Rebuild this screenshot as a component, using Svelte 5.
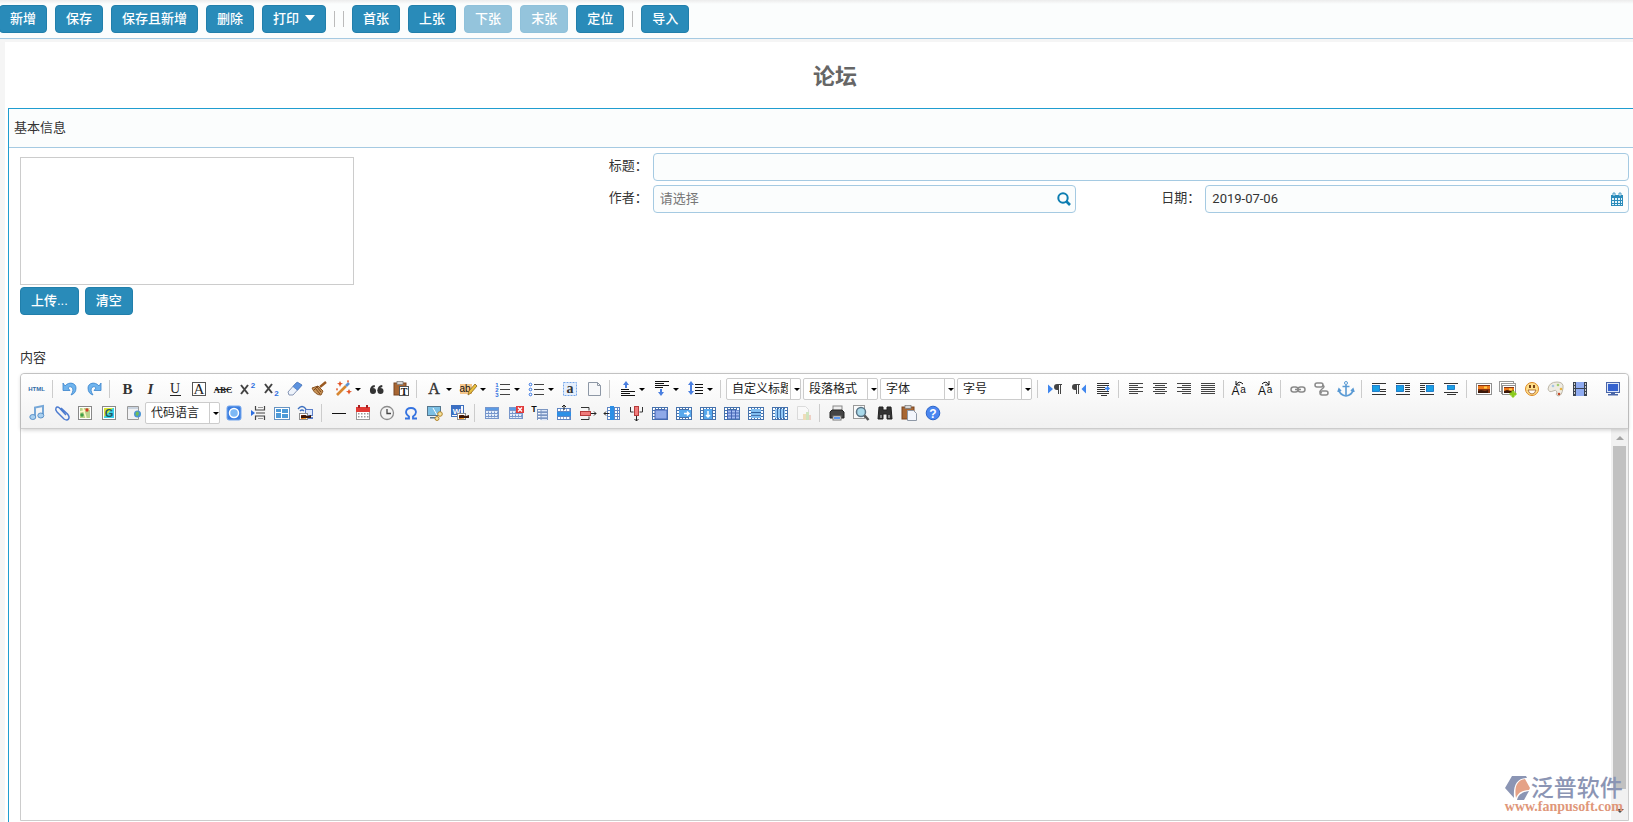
<script lang="ts">
  interface Tool {
    type: 'button' | 'menu' | 'select' | 'sep' | 'blank';
    icon?: string;
    label?: string;
  }

  const b = (icon: string, label: string): Tool => ({ type: 'button', icon, label });
  const m = (icon: string, label: string): Tool => ({ type: 'menu', icon, label });
  const s = (label: string): Tool => ({ type: 'select', label });
  const sep: Tool = { type: 'sep' };
  const blank: Tool = { type: 'blank' };

  const r = (x: number, y: number, w: number, h: number, fill: string, extra = '') =>
    `<rect x="${x}" y="${y}" width="${w}" height="${h}" fill="${fill}" ${extra}/>`;
  const p = (d: string, fill = 'none', stroke = 'none', width = 1) =>
    `<path d="${d}" fill="${fill}" stroke="${stroke}" stroke-width="${width}"/>`;
  const t = (x: number, y: number, size: number, text: string, fill = '#333', extra = '') =>
    `<text x="${x}" y="${y}" font-size="${size}" fill="${fill}" text-anchor="middle" font-family="Liberation Serif, serif" ${extra}>${text}</text>`;
  // rows of [x, y, width]
  const bars = (rows: number[][], fill = '#444') => rows.map(([x, y, w]) => r(x, y, w, 1, fill)).join('');
  const sans = 'style="font-family:Liberation Sans,sans-serif;font-weight:700"';
  const thin = 'style="font-family:Liberation Sans,sans-serif"';

  const undo = p('M5 6l2 3c4-5 11-3 11 2 0 4-2 6-5 7 2-3 2.600-6 1-7.500-1.500-1.500-3.500-.500-4 .5l2 2.500H5z', '#6fb4ee', '#3b84cc', 0.8);
  const grid = () =>
    r(5, 6, 14, 12, '#7796cb') + r(6, 7, 12, 2, '#5b9ae4') +
    [10, 13, 16].map((y) => [6, 9, 12, 15].map((x) => r(x, y, 2, y === 16 ? 1 : 2, '#e6effb') + r(x + 2, y, 0.5, 1, '#e6effb')).join('')).join('');
  const cells = r(4, 6, 16, 13, '#4773ad') +
    [7, 10, 13, 16].map((y) => r(5, y, 2, 2, '#fff') + r(17, y, 2, 2, '#fff')).join('') +
    [8, 11, 14].map((x) => r(x, 7, 2, 1, '#fff') + r(x, 17, 2, 1, '#fff')).join('');
  const justify = (rows: number[][]) => bars(rows.map(([x, w], i) => [x, 6 + i * 2, w]), '#444');
  const bluebox = (x: number, y: number, h = 6) => r(x, y, 7, h, '#19a0e6', 'stroke="#0a6cc0" stroke-width=".8"');
  const photo = (x: number, y: number, w: number, h: number) =>
    r(x, y, w, h, '#fff', 'stroke="#8f8f8f"') + r(x + 1.5, y + 1.5, w - 3, h - 3, '#8a3510') +
    r(x + 1.5, y + 2.5, w - 3, 3, '#ef7c1c') + r(x + w / 2, y + 3, 3, 2, '#ffcf4a') + p(`M${x + 1.5} ${y + h - 1.5}v-2l3-1 4 1 3-1v3z`, '#3a1708');
  const arrowUp = (x: number, y: number) => p(`M${x} ${y}l3 4h-2v3h-2v-3h-2z`, '#4a7fe0');
  const arrowDown = (x: number, y: number) => p(`M${x} ${y}l3-4h-2v-3h-2v3h-2z`, '#4a7fe0');
  const pilcrow = (x: number) => p(`M${x + 8} 7h-5a3 3 0 0 0 0 6h1v4h1V8h1v9h1V8h1z`, '#444');

  const icons: Record<string, string> = {
    html: t(11.5, 14, 6, 'HTML', '#2f6ba8', sans),
    undo,
    redo: `<g transform="translate(24 0) scale(-1 1)">${undo}</g>`,
    bold: t(12.5, 17, 15, 'B', '#333', 'font-weight="700"'),
    italic: t(11.5, 17, 15, 'I', '#333', 'font-weight="700" font-style="italic"'),
    underline: t(12, 16, 14, 'U', '#222') + r(7, 18, 11, 1, '#222'),
    border: r(5.5, 5.5, 13, 13, '#fff', 'stroke="#555"') + t(12, 17, 15, 'A', '#222'),
    strike: t(12, 16, 9, 'ABC', '#222', 'font-weight="700"') + r(4, 12, 16, 1, '#222'),
    sup: p('M6 8l7 9M13 8l-7 9', 'none', '#444', 2) + t(18, 11, 8, '2', '#2f6fe0', sans),
    sub: p('M6 7l7 9M13 7l-7 9', 'none', '#444', 2) + t(17.5, 18.5, 8, '2', '#2f6fe0', sans),
    eraser: p('M5 15l8-9q1-1 2 0l4 2-9 10H6z', '#eef3fb', '#8796b5') + p('M10 9.500l3.500-3.700q1-1 2 0l3.500 2.400-4.500 5z', '#5c92df', '#4778c2', 0.7),
    broom: p('M19 5l-6 5', 'none', '#9a5a22', 2.4) + p('M5 11l6-2 5 5-2 4q-6 0-9-7z', '#c89458', '#8b5524') + p('M8 11l5 6M10 10l4 5M11 9l-4 4', 'none', '#7c461b'),
    magic: p('M6 18L15 9', 'none', '#d78631', 2.6) + p('M15 9l3-3', 'none', '#5d91d1', 2.6) +
      p('M9 4l1 2 2 .5-2 1L9 10 8 7.500l-2-1L8 6zM18 12l1 2 2 .5-2 1-1 2-1-2-2-1 2-.5zM17 3l1 1-1 2-1-2zM6 11l1 1-1 2-1-2z', '#e35425'),
    quote: `<circle cx="8" cy="14" r="3" fill="#333"/><circle cx="15.500" cy="14" r="3" fill="#333"/>` + p('M5.800 14q0-4.500 4-5M13.300 14q0-4.500 4-5', 'none', '#333', 1.8),
    paste: r(5, 6, 12, 12, '#a86632', 'stroke="#794520"') + r(8, 4.5, 6, 3, '#d8d8d8', 'stroke="#777" stroke-width=".7"') +
      r(10.5, 9.5, 9, 9, '#fff', 'stroke="#555"') + t(15, 17.5, 10, 'T', '#111', 'font-weight="700"'),
    forecolor: t(12, 17, 16, 'A', '#333', 'stroke="#333" stroke-width=".4"'),
    backcolor: r(4, 7, 12, 10, '#f5c68b') + t(9, 15, 10, 'ab', '#111', thin) + p('M12 18l1-4 6-7 2 2-6 7z', '#e9bf3e', '#8a6521', 0.8),
    ol: t(7, 9.5, 6, '1', '#2f6fe0', sans) + t(7, 14.5, 6, '2', '#2f6fe0', sans) + t(7, 19.5, 6, '3', '#2f6fe0', sans) + bars([[10, 7, 10], [10, 12, 10], [10, 17, 10]]),
    ul: [7, 12, 17].map((y) => `<circle cx="6.500" cy="${y + 0.5}" r="1.300" fill="#fff" stroke="#2f6fe0"/>`).join('') + bars([[10, 7, 10], [10, 12, 10], [10, 17, 10]]),
    selectall: r(5.5, 5.5, 13, 13, '#e5effd', 'stroke="#77a8ea" stroke-dasharray="2 1"') + t(12, 16, 14, 'a', '#333', 'font-weight="700"'),
    clear: p('M6.500 5.500h9l3 3v10h-12z', '#f7f8fa', '#8e98a6') + p('M15.500 5.500v3h3', 'none', '#8e98a6'),
    rowtop: arrowUp(11, 4) + bars([[6, 12, 8], [6, 14, 14], [6, 16, 9], [6, 18, 14]], '#111'),
    rowbottom: arrowDown(12, 19) + bars([[6, 4, 14], [6, 6, 9], [6, 8, 14], [6, 10, 8]], '#111'),
    lineheight: arrowUp(8, 4) + arrowDown(8, 18) + bars([[12, 7, 8], [12, 10, 8], [12, 13, 8], [12, 16, 8]], '#111'),
    ltr: p('M5 7.500l5 4.500-5 4.500z', '#3f86ee') + pilcrow(11),
    rtl: p('M19 7.500L14.500 12l4.500 4.500z', '#3f86ee') + pilcrow(5),
    indent: bars([[6, 6, 12], [6, 8, 12], [6, 10, 8], [6, 12, 8], [6, 14, 12], [6, 16, 12], [10, 18, 6]], '#333') + p('M14 10.500h2v-2l3 3-3 3v-2h-2z', '#3f86ee'),
    left: justify([[5, 14], [5, 9], [5, 14], [5, 9], [5, 14], [5, 9]]),
    center: justify([[5, 14], [7, 10], [5, 14], [7, 10], [5, 14], [7, 10]]),
    right: justify([[5, 14], [10, 9], [5, 14], [10, 9], [5, 14], [10, 9]]),
    full: justify([[5, 14], [5, 14], [5, 14], [5, 14], [5, 14], [5, 14]]),
    upper: t(6.5, 18, 12, 'A', '#111', thin) + t(14, 16, 10, 'a', '#111', thin) + p('M7 8q3-5 7-1M7 4v4h4', 'none', '#111'),
    lower: t(9, 18, 12, 'A', '#111', thin) + t(16.5, 16, 10, 'a', '#111', thin) + p('M9 7q4-4 7 1M16 4v4h-4', 'none', '#111'),
    link: `<g fill="none" stroke="#8a8a8a" stroke-width="1.500"><rect x="5" y="10" width="7" height="5" rx="2.500"/><rect x="12" y="10" width="7" height="5" rx="2.500"/><path d="M9 12.500h6"/></g>`,
    unlink: `<g fill="none" stroke="#8a8a8a" stroke-width="1.500"><rect x="5" y="6" width="8" height="4" rx="2"/><rect x="10" y="14" width="8" height="4" rx="2"/><path d="M12 8q4 1 0 4t0 4"/></g>`,
    anchor: `<circle cx="12" cy="6" r="1.500" fill="#fff" stroke="#5a9ad4"/>` + p('M12 8v10M8.500 9.500h7M5 13q1 5 7 6 6-1 7-6M4 15l1-3 2 2M20 15l-1-3-2 2', 'none', '#5a9ad4', 1.6),
    imgnone: bars([[5, 6, 14], [13, 12, 6], [13, 14, 6], [5, 17, 14]], '#333') + bluebox(5.5, 8.5),
    imgleft: bars([[5, 6, 14], [14, 8, 5], [14, 10, 5], [14, 12, 5], [14, 14, 5], [5, 17, 14]], '#333') + bluebox(5.5, 8.5),
    imgright: bars([[5, 6, 14], [5, 8, 5], [5, 10, 5], [5, 12, 5], [5, 14, 5], [5, 17, 14]], '#333') + bluebox(11.5, 8.5),
    imgcenter: bars([[5, 6, 14], [5, 15, 14], [8, 17, 9]], '#333') + bluebox(8.5, 8.5, 4),
    image: photo(4.5, 6.5, 15, 11),
    images: r(3.5, 4.5, 14, 10, '#fff', 'stroke="#999"') + r(5.5, 6.5, 14, 10, '#fff', 'stroke="#999"') + photo(6.5, 8.5, 13, 9) + p('M16 14h2v2h2v2h-2v2h-2v-2h-2v-2h2z', '#8ccb1f', '#8ccb1f'),
    smile: `<circle cx="12" cy="12" r="6.500" fill="#ffe08a" stroke="#dc8723"/>` + p('M8 13h8q-1 4-4 4t-4-4z', '#fff', '#a15a1c', 0.8) + r(9, 8, 2, 3, '#7a4316') + r(13, 8, 2, 3, '#7a4316'),
    palette: p('M4 12q1-7 9-7 7 0 6 6-1 8-5 8-3-1-1-4-1-3-4-1-4 2-5-2z', '#eeebe2', '#bdb7a8') +
      `<circle cx="9" cy="9" r="1.300" fill="#a7c6e4"/><circle cx="14" cy="8" r="1.300" fill="#a3cf72"/><circle cx="17" cy="12" r="1.300" fill="#e7b343"/><circle cx="15" cy="17" r="1.300" fill="#c44b2b"/>`,
    video: r(5, 5, 14, 14, '#3a4351') + r(8, 5, 8, 6, '#8fabf0') + r(8, 12, 8, 7, '#8fabf0') + [6, 9, 12, 15].map((y) => r(6, y, 1, 2, '#ccc') + r(17, y, 1, 2, '#ccc')).join(''),
    screen: r(5.5, 5.5, 13, 10, '#dde6f7', 'stroke="#4a66a8"') + r(7, 7, 10, 7, '#3462cf') + r(10, 16, 4, 1, '#4a66a8') + r(7, 17, 10, 1.5, '#4a66a8'),
    music: p('M10 16V6.500L18 5v9', 'none', '#77a8d8', 2) + `<ellipse cx="7.800" cy="16" rx="3" ry="2.500" fill="#a9d0f0" stroke="#5c92c8"/><ellipse cx="15.800" cy="14.500" rx="3" ry="2.500" fill="#a9d0f0" stroke="#5c92c8"/>`,
    attach: p('M17 14L10.500 7Q8 5 7 7t1 4l7 7q3 2 4.500 0t-1-5l-6.500-6', 'none', '#4c7bd0', 1.5),
    map: r(5.5, 5.5, 13, 13, '#fff', 'stroke="#888"') + r(7, 7, 10, 10, '#b8d38a') + p('M7 11l10-3M10 7l3 10', 'none', '#fff7c8', 1.5) + `<circle cx="14" cy="9" r="1.700" fill="#cf3d25"/><circle cx="9" cy="14" r="1.700" fill="#3f9e46"/>`,
    gmap: r(5.5, 5.5, 13, 13, '#fff', 'stroke="#888"') + r(7, 7, 10, 10, '#37d0e8') + p('M7 7h9l-9 9z', '#d9e832') + t(12, 16, 11, 'G', '#1f5a62', sans),
    frame: p('M6.500 5.500h11v13h-11z', '#f1f2f4', '#999') + r(7, 6, 10, 2, '#c9d3df') + `<circle cx="16.500" cy="13" r="3.500" fill="#4a93d5"/>` + p('M15 11l2-.5 1 2-1.500 3-2-2z', '#6fbd58'),
    app: r(5, 5, 14, 14, '#3d7fe0', 'rx="2" stroke="#76a8ee"') + `<circle cx="12" cy="12" r="4.500" fill="#7db8f5" stroke="#fff" stroke-width="1.500"/>`,
    pagebreak: p('M5 9l4 3-4 3z', '#2f6fe0') + p('M9.500 5v4h9V5M9.500 19v-4h9v4M10 12h9', 'none', '#444', 1.2) + r(12, 6, 5, 1, '#999') + r(12, 17, 5, 1, '#999'),
    template: r(4.500, 6.500, 15, 12, '#fff', 'stroke="#6693c2"') + r(6, 8, 5, 3, '#4d9ad8') + r(12, 8, 6, 4, '#4d9ad8') + r(6, 12, 5, 5, '#4d9ad8') + r(12, 13, 6, 4, '#4d9ad8'),
    remote: p('M4 8q4-5 8 0M6 10q2-2 4 0', 'none', '#3c6fbf', 1.3) + r(11.5, 8.5, 7, 6, '#dfe9fb', 'stroke="#5a7ec8"') + r(13, 16, 6, 2, '#5a7ec8') + photo(5.5, 12.5, 8, 6),
    hr: r(5, 12, 14, 1, '#111'),
    date: r(5.5, 6.5, 13, 12, '#fff', 'stroke="#999"') + r(5, 6, 14, 5, '#e23a35') + r(7, 4, 2, 3, '#a52020') + r(15, 4, 2, 3, '#a52020') +
      [12, 15].map((y) => [7, 10, 13, 16].map((x) => r(x, y, 1.5, 1.5, '#999')).join('')).join(''),
    time: `<circle cx="12" cy="12" r="6.500" fill="#f4f4f4" stroke="#8c8c8c" stroke-width="1.300"/>` + p('M12 8v4.500h4', 'none', '#444', 1.3),
    omega: p('M6 17.500h4v-2q-3-2-3-4.500Q7.500 7 12 7t5 4q0 2.500-3 4.500v2h4', 'none', '#3573e0', 1.8),
    snap: r(4.5, 5.500, 13, 9, '#7cc0e4', 'stroke="#54758c"') + r(7, 16, 8, 1.500, '#54758c') + `<circle cx="17" cy="13" r="2.300" fill="#f5e29b" stroke="#b3852c"/><circle cx="14" cy="17.500" r="2" fill="#f5e29b" stroke="#b3852c"/>` + p('M10 7l4 7', 'none', '#fff'),
    word: r(4.5, 4.500, 12, 11, '#f4f8ff', 'stroke="#3d6fbd"') + r(5, 5, 9, 9, '#3a6fc4') + t(9.5, 12.5, 8, 'W', '#fff', sans) + photo(10.5, 12.5, 8, 6),
    table: grid(),
    deltable: grid() + r(12, 5, 8, 7, '#e13a3a') + p('M14 6.500l4 4M18 6.500l-4 4', 'none', '#fff', 1.4),
    tabletitle: t(6, 11, 9, 'T', '#111', sans) + r(9, 8, 11, 11, '#7b96c2') + [8, 11, 14, 17].map((y) => r(10, y + 1, 2.500, 1.300, '#fff') + r(13.500, y + 1, 5.500, 1.300, '#dce7f8')).join(''),
    insrow: r(5, 7, 14, 12, '#5f86c4') + [8, 16].map((y) => [6, 9, 12, 15].map((x) => r(x, y, 2.300, 2, '#fff')).join('')).join('') + r(5, 11, 14, 4, '#2c8fe6') + p('M12 9V4M10 6l2-2 2 2', 'none', '#222'),
    delrow: p('M5 6.500h8v3M5 18.500h8v-3', 'none', '#333') + r(4.500, 10.500, 10, 4, '#f07b7b', 'stroke="#b63b3b"') + p('M15 12.500h5M18 10.500l2 2-2 2', 'none', '#222'),
    inscol: r(7, 6, 13, 13, '#5f86c4') + [7, 10, 13, 16].map((y) => r(8, y, 2, 2, '#fff') + r(15, y, 2, 2, '#fff') + r(18, y, 1, 2, '#fff')).join('') + r(10, 5, 4, 14, '#2c8fe6') + p('M9 12.500H4M6 10.500l-2 2 2 2', 'none', '#222'),
    delcol: p('M6.500 6v5h3M18.500 6v5h-3', 'none', '#333') + r(10.500, 5.500, 4, 9, '#f07b7b', 'stroke="#b63b3b"') + p('M12.500 15v5M10.500 18l2 2 2-2', 'none', '#222'),
    merge: cells + r(7, 9, 12, 9, '#8ea9e8', 'stroke="#4565b5"'),
    mergeright: cells + r(7, 9, 12, 7, '#58a8ec') + p('M12 12.500h5M15 10.500l2 2-2 2', 'none', '#fff', 1.5),
    mergedown: cells + r(8, 8, 8, 10, '#58a8ec') + p('M12 10v6M10 14l2 2 2-2', 'none', '#fff', 1.5),
    split: cells + r(7, 9, 12, 9, '#4565b5') + [9, 12, 15].map((y) => [8, 12, 16].map((x) => r(x, y + 0.5, 3, 2, '#a5bdf2')).join('')).join(''),
    splitrows: cells + [8, 12, 15].map((y) => r(7, y, 10, y === 8 ? 3 : 2, '#7fbdf0')).join('') + r(7, 11, 10, 1, '#2f5f9c'),
    splitcols: cells + r(7, 8, 10, 9, '#8fc5f3') + [9, 12, 15].map((x) => r(x, 7, 1, 11, '#3a6cab')).join(''),
    chart: `<g opacity=".35">` + p('M5.500 5.500h8l3 3v10h-11z', '#fff', '#aaa') + r(11, 13, 3, 6, '#e8b250') + r(14, 11, 3, 8, '#8cc860') + r(17, 14, 2, 5, '#e58f70') + '</g>',
    print: r(8, 5, 9, 6, '#eee', 'stroke="#888"') + p('M5 11l2-2h10l2 2v6H5z', '#444', '#222') + r(8, 15, 8, 4, '#fff', 'stroke="#777"') + r(9, 16, 6, 2, '#5b97ee'),
    preview: r(4.500, 4.500, 11, 13, '#fafafa', 'stroke="#999"') + `<circle cx="12" cy="11" r="4.500" fill="#a9d9ea" stroke="#5b7586" stroke-width="1.500"/>` + p('M15.500 14.500l4 4.500', 'none', '#555', 2.5),
    find: p('M6 6h4v3h4V6h4l1 12h-5v-5h-4v5H5z', '#333', '#222') + r(7, 14, 2, 3, '#888') + r(15, 14, 2, 3, '#888'),
    drafts: r(5, 6, 12, 12, '#a86632', 'stroke="#794520"') + r(8, 4.500, 6, 3, '#d8d8d8', 'stroke="#777" stroke-width=".7"') + p('M10.500 9.500h6l3 3v7h-9z', '#f3f6fc', '#8e98a6'),
    help: `<circle cx="12" cy="12" r="6.800" fill="#4a86f0" stroke="#2d65c8"/>` + t(12, 16.5, 12, '?', '#fff', sans),
  };

  const tools: Tool[] = [
    b('html', '源代码'), sep, b('undo', '撤销'), b('redo', '重做'), sep,
    b('bold', '加粗'), b('italic', '斜体'), b('underline', '下划线'), b('border', '字符边框'), b('strike', '删除线'),
    b('sup', '上标'), b('sub', '下标'), b('eraser', '清除格式'), b('broom', '格式刷'), m('magic', '自动排版'),
    b('quote', '引用'), b('paste', '纯文本粘贴模式'), sep,
    m('forecolor', '字体颜色'), m('backcolor', '背景色'), m('ol', '有序列表'), m('ul', '无序列表'),
    b('selectall', '全选'), b('clear', '清空文档'), sep,
    m('rowtop', '段前距'), m('rowbottom', '段后距'), m('lineheight', '行间距'), sep,
    s('自定义标题'), s('段落格式'), s('字体'), s('字号'), sep,
    b('ltr', '从左向右输入'), b('rtl', '从右向左输入'), b('indent', '首行缩进'), sep,
    b('left', '居左对齐'), b('center', '居中对齐'), b('right', '居右对齐'), b('full', '两端对齐'), sep,
    b('upper', '字母大写'), b('lower', '字母小写'), sep,
    b('link', '超链接'), b('unlink', '取消链接'), b('anchor', '锚点'), sep,
    b('imgnone', '默认'), b('imgleft', '左浮动'), b('imgright', '右浮动'), b('imgcenter', '居中'), sep,
    b('image', '单图上传'), b('images', '多图上传'), b('smile', '表情'), b('palette', '涂鸦'), b('video', '视频'), blank,
    b('screen', '全屏'),
    b('music', '音乐'), b('attach', '附件'), b('map', 'Baidu地图'), b('gmap', 'Google地图'), b('frame', '插入Iframe'),
    s('代码语言'), b('app', '百度应用'), b('pagebreak', '分页'), b('template', '模板'), b('remote', '背景'), sep,
    b('hr', '分隔线'), b('date', '日期'), b('time', '时间'), b('omega', '特殊字符'), b('snap', '截图'), b('word', '图片转存'), sep,
    b('table', '插入表格'), b('deltable', '删除表格'), b('tabletitle', '表格前插入行'), b('insrow', '前插入行'), b('delrow', '删除行'),
    b('inscol', '前插入列'), b('delcol', '删除列'), b('merge', '合并多个单元格'), b('mergeright', '右合并单元格'),
    b('mergedown', '下合并单元格'), b('split', '完全拆分单元格'), b('splitrows', '拆分成行'), b('splitcols', '拆分成列'), b('chart', '图表'), sep,
    b('print', '打印'), b('preview', '预览'), b('find', '查询替换'), b('drafts', '从草稿箱加载'), b('help', '帮助'),
  ];

  let subject = $state('');
  let author = $state('');
  let date = $state('2019-07-06');
  let content = $state('');
</script>

<div class="page" lang="zh-CN">
  <nav class="actions">
    <button class="btn">新增</button>
    <button class="btn">保存</button>
    <button class="btn">保存且新增</button>
    <button class="btn">删除</button>
    <button class="btn">打印<span class="btn-caret"></span></button>
    <span class="divider"></span>
    <span class="divider"></span>
    <button class="btn">首张</button>
    <button class="btn">上张</button>
    <button class="btn" disabled>下张</button>
    <button class="btn" disabled>末张</button>
    <button class="btn">定位</button>
    <span class="divider"></span>
    <button class="btn">导入</button>
  </nav>

  <main class="sheet">
    <h1>论坛</h1>
    <section class="panel">
      <h2>基本信息</h2>
      <div class="panel-body">
        <div class="form">
          <div class="picture">
            <div class="picture-box"></div>
            <div class="picture-actions">
              <button class="btn">上传...</button>
              <button class="btn">清空</button>
            </div>
          </div>
          <div class="fields">
            <div class="field wide">
              <label for="subject">标题：</label>
              <div class="control"><input id="subject" type="text" bind:value={subject} /></div>
            </div>
            <div class="field">
              <label for="author">作者：</label>
              <div class="control">
                <input id="author" type="text" placeholder="请选择" bind:value={author} />
                <button class="pick" aria-label="选择作者">
                  <svg width="14" height="14" viewBox="0 0 14 14"><circle cx="6" cy="6" r="4.700" fill="none" stroke="#0c7db1" stroke-width="2" /><path d="M9.500 9.500l3.500 3.500" stroke="#0c7db1" stroke-width="2.600" /></svg>
                </button>
              </div>
            </div>
            <div class="field">
              <label for="date">日期：</label>
              <div class="control">
                <input id="date" type="text" bind:value={date} />
                <button class="pick" aria-label="选择日期">
                  <svg width="14" height="14" viewBox="0 0 14 14"><path d="M1 3h12v11H1z" fill="#2a8bba" /><path d="M3 1h2v3H3zM9 1h2v3H9z" fill="#fff" stroke="#2a8bba" stroke-width=".8" /><path d="M2 6h2v2H2zM5 6h2v2H5zM8 6h2v2H8zM11 6h1v2h-1zM2 9h2v2H2zM5 9h2v2H5zM8 9h2v2H8zM11 9h1v2h-1zM2 12h2v1H2zM5 12h2v1H5zM8 12h2v1H8zM11 12h1v1h-1z" fill="#e4f4fb" /></svg>
                </button>
              </div>
            </div>
          </div>
        </div>

        <label class="content-label" for="content">内容</label>
        <div class="editor">
          <div class="toolbar" role="toolbar" aria-label="编辑器工具栏">
            {#each tools as tool}
              {#if tool.type === 'sep' || tool.type === 'blank'}
                <span class="tool-sep" class:blank={tool.type === 'blank'}></span>
              {:else if tool.type === 'select'}
                <span class="combo">
                  <select aria-label={tool.label}><option>{tool.label}</option></select>
                  <span class="combo-arrow"><i class="caret"></i></span>
                </span>
              {:else}
                <button class="tool" class:menu={tool.type === 'menu'} title={tool.label} aria-label={tool.label}>
                  <svg width="24" height="24" viewBox="0 0 24 24">{@html icons[tool.icon ?? '']}</svg>
                  {#if tool.type === 'menu'}<i class="caret"></i>{/if}
                </button>
              {/if}
            {/each}
          </div>
          <div class="canvas">
            <textarea id="content" bind:value={content}></textarea>
            <div class="scrollbar">
              <span class="scroll-up"></span>
              <span class="scroll-thumb"></span>
              <span class="scroll-down"></span>
            </div>
            <div class="brand">
              <div class="brand-name">
                <svg width="26" height="24" viewBox="0 0 26 24">
                  <path d="M7 0h14l1 2C12 2 8 9 9 22L0 12z" fill="#8b95b4" />
                  <path d="M20 3l5 9-1 2c-7 0-11 3-13 8C9 11 12 4 20 3z" fill="#e5a287" />
                  <path d="M12 24c1-5 5-8 12-9l-5 9z" fill="#8b95b4" />
                </svg>
                <span>泛普软件</span>
              </div>
              <div class="brand-url">www.fanpusoft.com</div>
            </div>
          </div>
        </div>
      </div>
    </section>
  </main>
</div>

<style>
  :global(body) {
    margin: 0;
    background: #f5f5f5;
  }

  .page {
    display: flex;
    flex-direction: column;
    min-height: 100vh;
    overflow: hidden;
    color: #333;
    font-family: "Liberation Sans", "Noto Sans CJK SC", sans-serif;
    font-size: 13px;
    line-height: 18px;
  }

  .page :is(button, input, select, textarea) {
    font-family: inherit;
    font-size: inherit;
    color: inherit;
  }

  .actions {
    display: flex;
    align-items: center;
    gap: 8px;
    height: 38px;
    margin-bottom: 3px;
    margin-left: -1px;
    background: linear-gradient(#ececec, #fbfdfd 4px);
    border-bottom: 1px solid #a5cae2;
  }

  .page .btn {
    display: flex;
    align-items: center;
    flex: none;
    box-sizing: border-box;
    height: 28px;
    padding: 0 10px 4px;
    border: 1px solid #217fab;
    border-radius: 4px;
    background: #298bb9;
    color: #fff;
    font-weight: 500;
    white-space: nowrap;
    cursor: pointer;
  }

  .page .btn:disabled {
    border-color: #8fc1da;
    background: #94c4dc;
    cursor: default;
  }

  .btn-caret {
    margin: 2px 0 0 6px;
    border: 5px solid transparent;
    border-top: 6px solid #fff;
    border-bottom: 0;
  }

  .divider {
    width: 1px;
    height: 16px;
    background: #bbb;
  }

  .sheet {
    display: flex;
    flex: 1;
    flex-direction: column;
    margin-left: 5px;
    padding-left: 3px;
    background: #fff;
  }

  h1 {
    margin: 0;
    padding: 19px 0 15px 29px;
    color: #666;
    font-size: 22px;
    line-height: 32px;
    text-align: center;
  }

  .panel {
    display: flex;
    flex: 1;
    flex-direction: column;
    border-top: 1px solid #1f9dd0;
    border-left: 1px solid #1f9dd0;
  }

  h2 {
    margin: 0;
    padding: 10px 5px;
    background: #fbfdfd;
    border-bottom: 1px solid #a5cae2;
    font-size: 13px;
    font-weight: 400;
  }

  .panel-body {
    display: flex;
    flex: 1;
    flex-direction: column;
    padding: 5px 4px 1px 11px;
  }

  .form {
    display: grid;
    grid-template-columns: 15fr 26fr;
    align-items: start;
  }

  .picture {
    padding-top: 4px;
  }

  .picture-box {
    box-sizing: border-box;
    width: 334px;
    max-width: 100%;
    height: 128px;
    border: 1px solid #ccc;
  }

  .picture-actions {
    display: flex;
    gap: 6px;
    padding-top: 2px;
  }

  .fields {
    display: grid;
    grid-template-columns: 1fr 1fr;
    gap: 4px 85px;
  }

  .field {
    display: flex;
    align-items: center;
  }

  .field.wide {
    grid-column: 1 / -1;
  }

  .field label {
    flex: none;
    width: 44px;
    padding-bottom: 2px;
    white-space: nowrap;
  }

  .control {
    display: flex;
    flex: 1;
    align-items: center;
    box-sizing: border-box;
    min-width: 0;
    height: 28px;
    padding: 0 4px 0 6px;
    border: 1px solid #a5cae2;
    border-radius: 4px;
    background: #fbfdfd;
  }

  .control input {
    flex: 1;
    min-width: 0;
    padding: 0 0 2px;
    border: 0;
    outline: none;
    background: transparent;
  }

  .control input::placeholder {
    color: #777;
  }

  .page #date {
    font-family: Roboto, "Liberation Sans", sans-serif;
  }

  .pick {
    display: flex;
    padding: 0;
    border: 0;
    background: none;
    cursor: pointer;
  }

  .content-label {
    padding: 34px 0 6px;
  }

  .editor {
    display: flex;
    flex: 1;
    flex-direction: column;
    border: 1px solid #ccc;
    border-radius: 4px 4px 0 0;
  }

  .toolbar {
    display: flex;
    flex-wrap: wrap;
    padding: 3px 2px 3px 4px;
    background: linear-gradient(#fff, #f1f1f1);
    border-bottom: 1px solid #ccc;
    border-radius: 4px 4px 0 0;
    box-shadow: 0 1px 4px rgba(0, 0, 0, 0.2);
    z-index: 1;
  }

  .tool {
    display: flex;
    align-items: center;
    width: 24px;
    height: 24px;
    padding: 0;
    border: 0;
    background: none;
    cursor: pointer;
  }

  .tool svg {
    flex: none;
  }

  .tool.menu {
    width: 34px;
  }

  .caret {
    border: 3px solid transparent;
    border-top-color: #000;
    border-bottom: 0;
  }

  .tool-sep {
    width: 1px;
    height: 18px;
    margin: 3px 5px 3px 3px;
    background: #ccc;
  }

  .tool-sep.blank {
    background: none;
  }

  .combo {
    display: flex;
    box-sizing: border-box;
    width: 75px;
    height: 22px;
    margin: 1px 2px 1px 0;
    border: 1px solid #ccc;
    border-radius: 2px;
    background: #fff;
  }

  .page .combo select {
    flex: 1;
    min-width: 0;
    padding: 0 2px 0 5px;
    border: 0;
    outline: none;
    background: transparent;
    color: #222;
    font-size: 12px;
    appearance: none;
    text-overflow: clip;
  }

  .combo-arrow {
    display: flex;
    align-items: center;
    justify-content: flex-end;
    width: 9px;
    border-left: 1px solid #ccc;
    pointer-events: none;
  }

  .canvas {
    position: relative;
    display: flex;
    flex: 1;
    min-height: 240px;
  }

  .canvas textarea {
    flex: 1;
    padding: 8px;
    border: 0;
    outline: none;
    resize: none;
    background: #fff;
  }

  .scrollbar {
    display: flex;
    flex-direction: column;
    align-items: center;
    width: 17px;
    background: #f1f1f1;
  }

  .scroll-up {
    margin: 7px 0 6px;
    border: 4px solid transparent;
    border-top: 0;
    border-bottom-color: #a3a3a3;
  }

  .scroll-thumb {
    flex: 1;
    width: 13px;
    background: #c1c1c1;
  }

  .scroll-down {
    margin: 20px 0 7px;
    border: 4px solid transparent;
    border-top-color: #505050;
    border-bottom: 0;
  }

  .brand {
    position: absolute;
    right: 5px;
    bottom: 6px;
    pointer-events: none;
  }

  .brand-name {
    display: flex;
    align-items: center;
    color: #8b95b4;
    font-size: 23px;
    font-weight: 500;
    line-height: 22px;
  }

  .brand-url {
    color: #e0977a;
    font-family: "Liberation Serif", serif;
    font-size: 14px;
    font-weight: 700;
    line-height: 14px;
  }
</style>
